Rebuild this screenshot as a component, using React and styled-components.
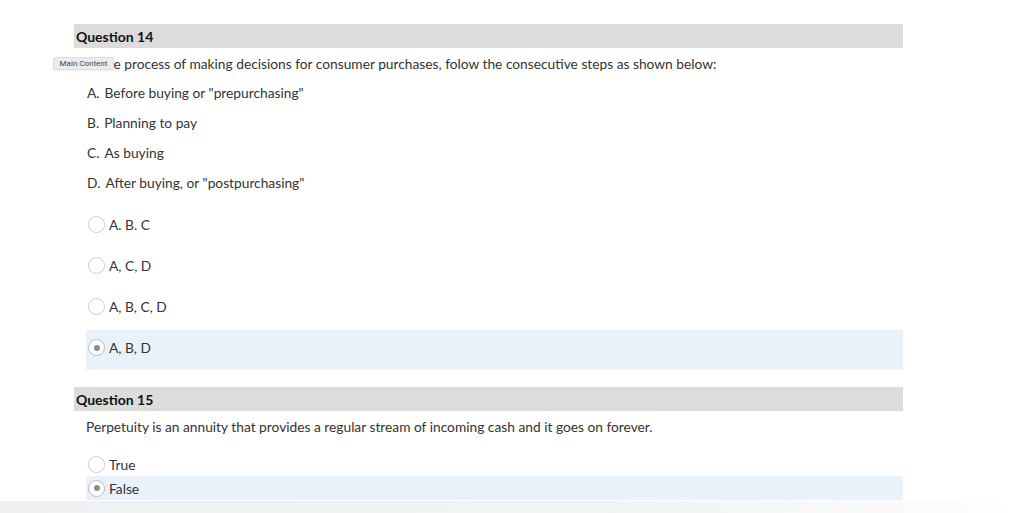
import React from "react";
import styled, { createGlobalStyle } from "styled-components";

const Global = createGlobalStyle`
  html, body { margin: 0; padding: 0; background: #fff; }
  body { font-family: Lato, "Open Sans", sans-serif; color: #333; }
`;

const Page = styled.div`
  width: 1024px;
  height: 513px;
  overflow: hidden;
  position: relative;
  box-sizing: border-box;
  padding: 24px 121px 0 74px;
`;

const Question = styled.section`
  display: flex;
  flex-direction: column;
  margin-top: ${(p) => p.$top || 0}px;
`;

const Header = styled.h2`
  margin: 0;
  height: 24px;
  background: #dcdcdc;
  font-size: 14px;
  font-weight: 700;
  color: #111;
  line-height: 25px;
  padding-left: 2px;
`;

const Body = styled.div`
  padding-left: 12px;
  display: flex;
  flex-direction: column;
`;

const Prompt = styled.p`
  margin: 0;
  position: relative;
  font-size: 13.75px;
  line-height: 16px;
  padding-top: ${(p) => p.$top}px;
  color: #333;
`;

const Tooltip = styled.span`
  position: absolute;
  left: -33px;
  top: ${(p) => p.$top}px;
  height: 13px;
  width: 61px;
  box-sizing: border-box;
  text-align: center;
  background: #ececec;
  border: 1px solid #dedede;
  border-radius: 2px;
  font-family: Roboto, "DejaVu Sans", sans-serif;
  font-size: 8px;
  line-height: 12px;
  color: #444;
  box-shadow: 0 1px 2px rgba(0,0,0,0.06);
`;

const Steps = styled.ol`
  list-style: none;
  margin: 0;
  padding: 13px 0 0 1px;
  display: flex;
  flex-direction: column;
  gap: 14px;
`;

const Step = styled.li`
  font-size: 13.75px;
  line-height: 16px;
  display: flex;
  gap: 5px;
`;

const Options = styled.div`
  display: flex;
  flex-direction: column;
  margin: ${(p) => p.$top}px 0 0 12px;
  gap: ${(p) => p.$gap}px;
`;

const Option = styled.label`
  display: flex;
  align-items: center;
  box-sizing: border-box;
  height: ${(p) => p.$h}px;
  padding: 0 0 ${(p) => p.$lift || 0}px 2px;
  gap: 4px;
  font-size: 13.75px;
  color: #333;
  background: ${(p) => (p.$selected ? "#e9f1fb" : "transparent")};
`;

const Radio = styled.span`
  width: 15px;
  height: 15px;
  border-radius: 50%;
  border: 1px solid ${(p) => (p.$checked ? "#bbbbbb" : "#cccccc")};
  background: #fff;
  display: flex;
  align-items: center;
  justify-content: center;
  flex: none;
  &::after {
    content: "";
    width: 6px;
    height: 6px;
    border-radius: 50%;
    background: ${(p) => (p.$checked ? "#8c8c8c" : "transparent")};
  }
`;

const BottomShade = styled.div`
  position: absolute;
  left: 0;
  right: 0;
  bottom: 0;
  height: 12px;
  background: linear-gradient(to right, #eef0f2 0%, #f1f3f5 60%, #fafafa 88%, #fff 100%);
`;

const q14Options = ["A. B. C", "A, C, D", "A, B, C, D", "A, B, D"];
const steps = [
  ["A.", 'Before buying or "prepurchasing"'],
  ["B.", "Planning to pay"],
  ["C.", "As buying"],
  ["D.", 'After buying, or "postpurchasing"'],
];

export default function App() {
  return (
    <>
      <Global />
      <Page>
        <Question>
          <Header>Question 14</Header>
          <Body>
            <Prompt $top={8}>
              In the process of making decisions for consumer purchases, folow the consecutive steps as shown below:
              <Tooltip $top={9}>Main Content</Tooltip>
            </Prompt>
            <Steps>
              {steps.map(([k, t]) => (
                <Step key={k}>
                  <span>{k}</span>
                  <span>{t}</span>
                </Step>
              ))}
            </Steps>
          </Body>
          <Options $top={16} $gap={1}>
            {q14Options.map((o, i) => (
              <Option key={o} $h={40} $lift={5} $selected={i === 3}>
                <Radio $checked={i === 3} />
                {o}
              </Option>
            ))}
          </Options>
        </Question>
        <Question $top={17}>
          <Header>Question 15</Header>
          <Body>
            <Prompt $top={8}>
              Perpetuity is an annuity that provides a regular stream of incoming cash and it goes on forever.
            </Prompt>
          </Body>
          <Options $top={17} $gap={0}>
            <Option $h={24}>
              <Radio />
              True
            </Option>
            <Option $h={24} $selected>
              <Radio $checked />
              False
            </Option>
          </Options>
        </Question>
        <BottomShade />
      </Page>
    </>
  );
}
